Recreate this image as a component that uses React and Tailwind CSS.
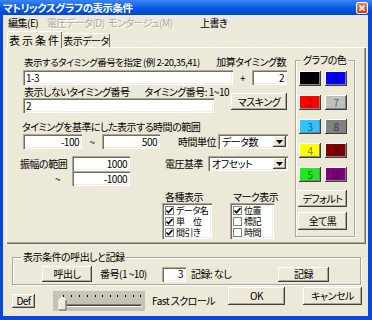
import React from "react";

const font = "font-['Noto_Sans_CJK_JP','Noto_Sans',sans-serif] [font-feature-settings:'palt']";
const raised = "bg-[#ece9d8] shadow-[inset_-1px_-1px_#404040,inset_1px_1px_#ffffff,inset_-2px_-2px_#aca899]";
const sunken = "bg-white shadow-[inset_1px_1px_#aca899,inset_2px_2px_#716f64,inset_-1px_-1px_#ffffff,inset_-2px_-2px_#f1efe2]";

function Btn({ w, h, children, className = "" }) {
  return (
    <div className={`${raised} ${w} ${h} flex items-center justify-center shrink-0 ${className}`}>
      {children}
    </div>
  );
}

function Field({ w, value, right, className = "" }) {
  return (
    <div className={`${sunken} ${w} h-[15px] shrink-0 flex items-center px-[3px] ${right ? "justify-end" : ""} ${className}`}>
      {value}
    </div>
  );
}

function Select({ w, value, className = "" }) {
  return (
    <div className={`${sunken} ${w} h-[15px] shrink-0 flex items-center pl-[4px] pr-[2px] ${className}`}>
      <span className="flex-1">{value}</span>
      <span className={`${raised} w-[13px] h-[11px] flex items-center justify-center`}>
        <svg width="7" height="4" viewBox="0 0 7 4"><path d="M0 0h7L3.5 4z" fill="#000" /></svg>
      </span>
    </div>
  );
}

function ColorBtn({ bg, fg, n }) {
  return (
    <div className={`w-[22px] h-[15px] flex items-center justify-center shadow-[inset_-1px_-1px_#404040,inset_1px_1px_#ffffff,inset_-2px_-2px_#808080] ${bg} ${fg}`}>
      {n}
    </div>
  );
}

function Check({ on, label }) {
  return (
    <div className="flex items-center h-[11px] leading-[11px] text-[9px] gap-[2px]">
      <span className="w-[9px] h-[9px] shrink-0 bg-white border border-[#808080] flex items-center justify-center">
        {on && (
          <svg width="7" height="7" viewBox="0 0 7 7"><path d="M0.5 3.5L2.5 5.5L6.5 1" stroke="#000" strokeWidth="1.6" fill="none" /></svg>
        )}
      </span>
      <span>{label}</span>
    </div>
  );
}

export default function App() {
  return (
    <div className={`${font} w-[372px] h-[320px] bg-[#0846dc] flex flex-col text-[10px] leading-[12px] tracking-[-0.5px] whitespace-nowrap text-black`}>
      <div className="h-[15px] bg-gradient-to-b from-[#3a86f5] via-[#0a5ae6] to-[#0046d4] flex items-center pl-[3px] pr-[4px]">
        <span className="text-white font-bold text-[10.5px] flex-1">マトリックスグラフの表示条件</span>
        <span className="w-[12px] h-[12px] rounded-[2px] border border-white bg-gradient-to-b from-[#f08060] to-[#d0401c] flex items-center justify-center">
          <svg width="6" height="6" viewBox="0 0 6 6"><path d="M0.5 0.5L5.5 5.5M5.5 0.5L0.5 5.5" stroke="#fff" strokeWidth="1.6" /></svg>
        </span>
      </div>
      <div className="flex-1 ml-[3px] mr-[4px] mb-[4px] bg-[#ece9d8] flex flex-col">
        <div className="h-[15px] flex items-center">
          <span className="ml-[5px] w-[39px]">編集(E)</span>
          <span className="w-[61px] text-[#aca899] [text-shadow:1px_1px_#fff]">電圧データ(D)</span>
          <span className="w-[92px] text-[#aca899] [text-shadow:1px_1px_#fff]">モンタージュ(M)</span>
          <span>上書き</span>
        </div>
        <div className="flex items-end mt-[1px] ml-[4px] h-[16px] relative z-10">
          <div className="w-[55px] h-[17px] -mb-px bg-[#ece9d8] border-t border-l border-white shadow-[inset_-1px_0_#716f64] flex items-center justify-center tracking-[2px] text-[11px]">
            表示条件
          </div>
          <div className="w-[48px] h-[14px] border-t border-white shadow-[inset_-1px_0_#716f64] flex items-center justify-center">
            表示データ
          </div>
        </div>
        <div className="ml-[3px] w-[360px] h-[197px] border-t border-l border-white shadow-[inset_-1px_-1px_#716f64,inset_-2px_-2px_#aca899] flex items-start">
          <div className="pl-[13px] w-[281px] shrink-0 flex flex-col">
            <div className="mt-[8px] h-[12px] flex justify-between pl-[4px] pr-[2px]">
              <span className="text-[9.5px]">表示するタイミング番号を指定 (例 2-20,35,41)</span>
              <span>加算タイミング数</span>
            </div>
            <div className="mt-[2px] flex items-center">
              <Field w="w-[210px] ml-[3px]" value="1-3" />
              <span className="w-[19px] text-center">+</span>
              <Field w="w-[35px]" value="2" right />
            </div>
            <div className="flex items-start">
              <div className="w-[211px] flex flex-col">
                <div className="mt-[1px] h-[12px] flex justify-between pl-[4px] pr-[2px]">
                  <span>表示しないタイミング番号</span>
                  <span>タイミング番号: 1~10</span>
                </div>
                <Field w="w-[191px] ml-[3px]" value="2" />
              </div>
              <Btn w="w-[56px]" h="h-[17px]" className="mt-[8px]">マスキング</Btn>
            </div>
            <div className="mt-[8px] h-[12px] pl-[2px]">タイミングを基準にした表示する時間の範囲</div>
            <div className="mt-[1px] flex items-center">
              <Field w="w-[59px] ml-[3px]" value="-100" right />
              <span className="w-[20px] text-center">~</span>
              <Field w="w-[58px]" value="500" right />
              <span className="ml-[18px] w-[40px]">時間単位</span>
              <Select w="w-[70px]" value="データ数" />
            </div>
            <div className="mt-[7px] flex items-center">
              <span className="w-[52px]">振幅の範囲</span>
              <Field w="w-[58px]" value="1000" right />
              <span className="ml-[35px] w-[43px]">電圧基準</span>
              <Select w="w-[80px]" value="オフセット" />
            </div>
            <div className="flex items-center">
              <span className="w-[52px] pl-[35px]">~</span>
              <Field w="w-[58px]" value="-1000" right />
            </div>
            <div className="mt-[5px] h-[12px] flex">
              <span className="ml-[145px] w-[68px]">各種表示</span>
              <span>マーク表示</span>
            </div>
            <div className="flex">
              <div className={`${sunken} ml-[142px] w-[50px] h-[36px] pl-[3px] pt-[2px] flex flex-col overflow-hidden`}>
                <Check on label="データ名" />
                <Check on label="単　位" />
                <Check on label="間引き" />
              </div>
              <div className={`${sunken} ml-[18px] w-[44px] h-[36px] pl-[3px] pt-[2px] flex flex-col overflow-hidden`}>
                <Check on label="位置" />
                <Check label="標記" />
                <Check label="時間" />
              </div>
            </div>
          </div>
          <fieldset className="ml-[7px] mt-[6px] w-[60px] h-[183px] border border-[#aca899] shadow-[inset_1px_1px_#fff,1px_1px_#fff] flex flex-col">
            <legend className="ml-[5px] px-[2px] bg-[#ece9d8]">グラフの色</legend>
            <div className="mt-[5px] pl-[3px] grid grid-cols-[22px_22px] gap-x-[4px] gap-y-[9px]">
              <ColorBtn bg="bg-black" fg="text-black" n="" />
              <ColorBtn bg="bg-[#0000ff]" fg="text-[#000090]" n="6" />
              <ColorBtn bg="bg-[#ff0000]" fg="text-[#900000]" n="2" />
              <ColorBtn bg="bg-[#c0c0c0]" fg="text-[#606060]" n="7" />
              <ColorBtn bg="bg-[#2fc4ff]" fg="text-[#00609a]" n="3" />
              <ColorBtn bg="bg-[#808080]" fg="text-[#404040]" n="8" />
              <ColorBtn bg="bg-[#ffff00]" fg="text-[#808000]" n="4" />
              <ColorBtn bg="bg-[#800000]" fg="text-[#400000]" n="9" />
              <ColorBtn bg="bg-[#22e822]" fg="text-[#007000]" n="5" />
              <ColorBtn bg="bg-[#800080]" fg="text-[#400040]" n="10" />
            </div>
            <Btn w="w-[49px]" h="h-[17px]" className="ml-[2px] mt-[8px]">デフォルト</Btn>
            <Btn w="w-[49px]" h="h-[18px]" className="ml-[2px] mt-[5px]">全て黒</Btn>
          </fieldset>
        </div>
        <fieldset className="ml-[9px] mt-[7px] w-[349px] h-[34px] border border-[#aca899] shadow-[inset_1px_1px_#fff,1px_1px_#fff] flex items-center">
          <legend className="ml-[8px] px-[2px] bg-[#ece9d8]">表示条件の呼出しと記録</legend>
          <div className="flex items-center pt-[3px]">
            <Btn w="w-[50px]" h="h-[16px]" className="ml-[29px]">呼出し</Btn>
            <span className="ml-[8px] w-[62px]">番号(1 ~10)</span>
            <Field w="w-[24px]" value="3" right />
            <span className="ml-[5px] w-[87px]">記録: なし</span>
            <Btn w="w-[51px]" h="h-[15px]">記録</Btn>
          </div>
        </fieldset>
        <div className="mt-[2px] flex items-start">
          <Btn w="w-[23px]" h="h-[14px]" className="ml-[9px] mt-[7px]">Def</Btn>
          <div className="ml-[18px] mt-[4px] w-[92px] h-[20px] bg-[#c6c3b5]">
            <svg width="92" height="20" viewBox="0 0 92 20">
              {[10, 18, 26, 34, 42, 49, 57, 64, 72, 80, 87].map((x) => (
                <rect key={x} x={x} y="4" width="1" height="2" fill="#000" />
              ))}
              <rect x="9" y="13" width="79" height="1" fill="#808080" />
              <rect x="9" y="14" width="79" height="1" fill="#404040" />
              <rect x="9" y="15" width="80" height="1" fill="#fff" />
              <path d="M6 19V9L9.5 5.5L13 9V19Z" fill="#ece9d8" stroke="#fff" />
              <path d="M13 9V19H6" fill="none" stroke="#404040" />
            </svg>
          </div>
          <span className="ml-[7px] mt-[8px] w-[70px]">Fast スクロール</span>
          <Btn w="w-[57px]" h="h-[18px]" className="ml-[6px]">OK</Btn>
          <Btn w="w-[59px]" h="h-[18px]" className="ml-[18px]">キャンセル</Btn>
        </div>
      </div>
    </div>
  );
}
